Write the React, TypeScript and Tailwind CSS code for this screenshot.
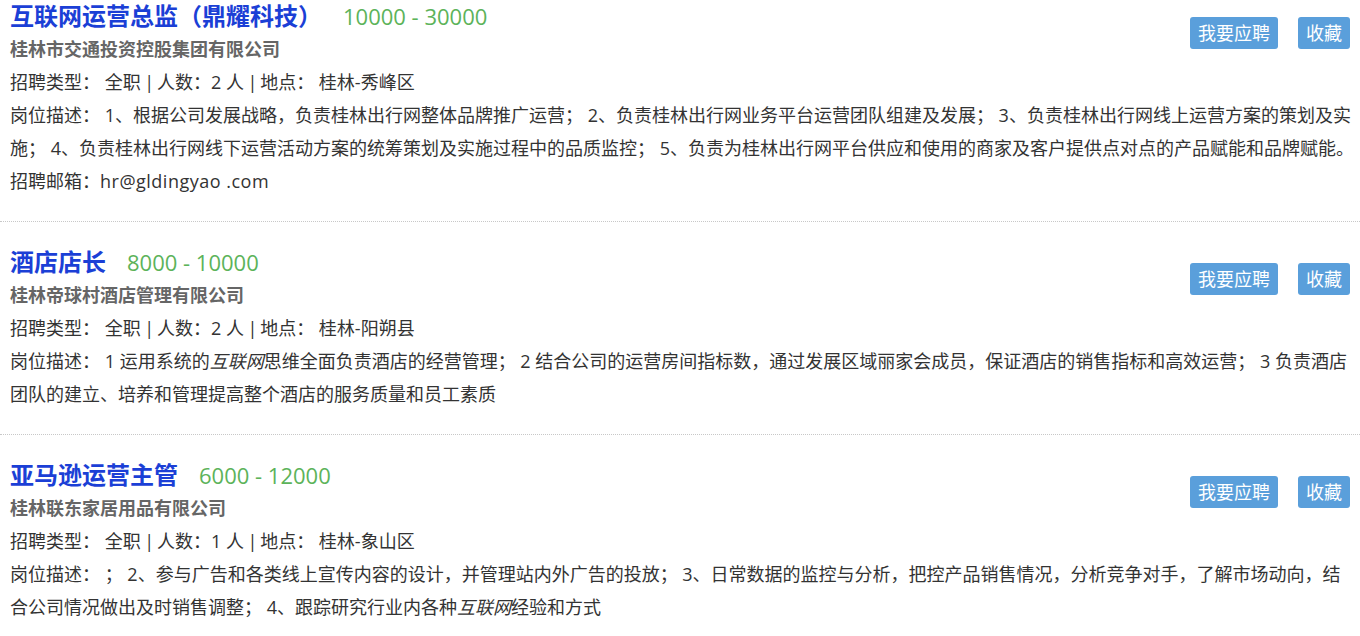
import React from "react";

type Job = {
  title: string;
  salary: string;
  company: string;
  count: string;
  place: string;
  desc: React.ReactNode;
  email?: string;
};

const jobs: Job[] = [
  {
    title: "互联网运营总监（鼎耀科技）",
    salary: "10000 - 30000",
    company: "桂林市交通投资控股集团有限公司",
    count: "2",
    place: "桂林-秀峰区",
    desc: (
      <>
        岗位描述： 1、根据公司发展战略，负责桂林出行网整体品牌推广运营； 2、负责桂林出行网业务平台运营团队组建及发展； 3、负责桂林出行网线上运营方案的策划及实
        <br />
        施； 4、负责桂林出行网线下运营活动方案的统筹策划及实施过程中的品质监控； 5、负责为桂林出行网平台供应和使用的商家及客户提供点对点的产品赋能和品牌赋能。
      </>
    ),
    email: "hr@gldingyao .com",
  },
  {
    title: "酒店店长",
    salary: "8000 - 10000",
    company: "桂林帝球村酒店管理有限公司",
    count: "2",
    place: "桂林-阳朔县",
    desc: (
      <>
        岗位描述： 1 运用系统的<em>互联网</em>思维全面负责酒店的经营管理； 2 结合公司的运营房间指标数，通过发展区域丽家会成员，保证酒店的销售指标和高效运营； 3 负责酒店
        <br />
        团队的建立、培养和管理提高整个酒店的服务质量和员工素质
      </>
    ),
  },
  {
    title: "亚马逊运营主管",
    salary: "6000 - 12000",
    company: "桂林联东家居用品有限公司",
    count: "1",
    place: "桂林-象山区",
    desc: (
      <>
        岗位描述： ； 2、参与广告和各类线上宣传内容的设计，并管理站内外广告的投放； 3、日常数据的监控与分析，把控产品销售情况，分析竞争对手，了解市场动向，结
        <br />
        合公司情况做出及时销售调整； 4、跟踪研究行业内各种<em>互联网</em>经验和方式
      </>
    ),
  },
];

const line = "h-[33px] text-[18px] leading-[33px] text-[#333333] whitespace-nowrap";

function JobItem({ job, first }: { job: Job; first?: boolean }) {
  return (
    <div
      className={
        "border-b border-dotted border-[#c8c8c8] px-[10px] pt-[23px] pb-[23px] " +
        (first ? "mt-[-24px]" : "")
      }
    >
      <div className="flex items-start justify-between">
        <div>
          <div className="flex h-[34px] items-center whitespace-nowrap">
            <span className="text-[24px] leading-[34px] font-bold text-[#1b3fd6]">{job.title}</span>
            <span className="ml-[21px] text-[22px] leading-[34px] text-[#5cb35a]">{job.salary}</span>
          </div>
          <div className="h-[33px] text-[18px] leading-[33px] font-bold text-[#666666] whitespace-nowrap">
            {job.company}
          </div>
        </div>
        <div className="mt-[18px] flex gap-[20px]">
          <button className="h-[32px] rounded-[3px] bg-[#5a9fdb] px-[8px] text-[18px] leading-[32px] text-white">
            我要应聘
          </button>
          <button className="h-[32px] rounded-[3px] bg-[#5a9fdb] px-[8px] text-[18px] leading-[32px] text-white">
            收藏
          </button>
        </div>
      </div>
      <div className={line}>
        招聘类型： 全职<span className="tracking-[-1px]"> | </span>人数：{job.count} 人
        <span className="tracking-[-1px]"> | </span>地点： {job.place}
      </div>
      <div className="h-[66px] text-[18px] leading-[33px] text-[#333333] whitespace-nowrap">{job.desc}</div>
      {job.email && (
        <div className={line}>
          招聘邮箱：<span className="tracking-[0.5px]">{job.email}</span>
        </div>
      )}
    </div>
  );
}

export default function App() {
  return (
    <div
      className="h-[636px] w-[1360px] overflow-hidden bg-white"
      style={{ fontFamily: "'Open Sans','Noto Sans CJK SC',sans-serif" }}
    >
      {jobs.map((j, i) => (
        <JobItem key={i} job={j} first={i === 0} />
      ))}
    </div>
  );
}
